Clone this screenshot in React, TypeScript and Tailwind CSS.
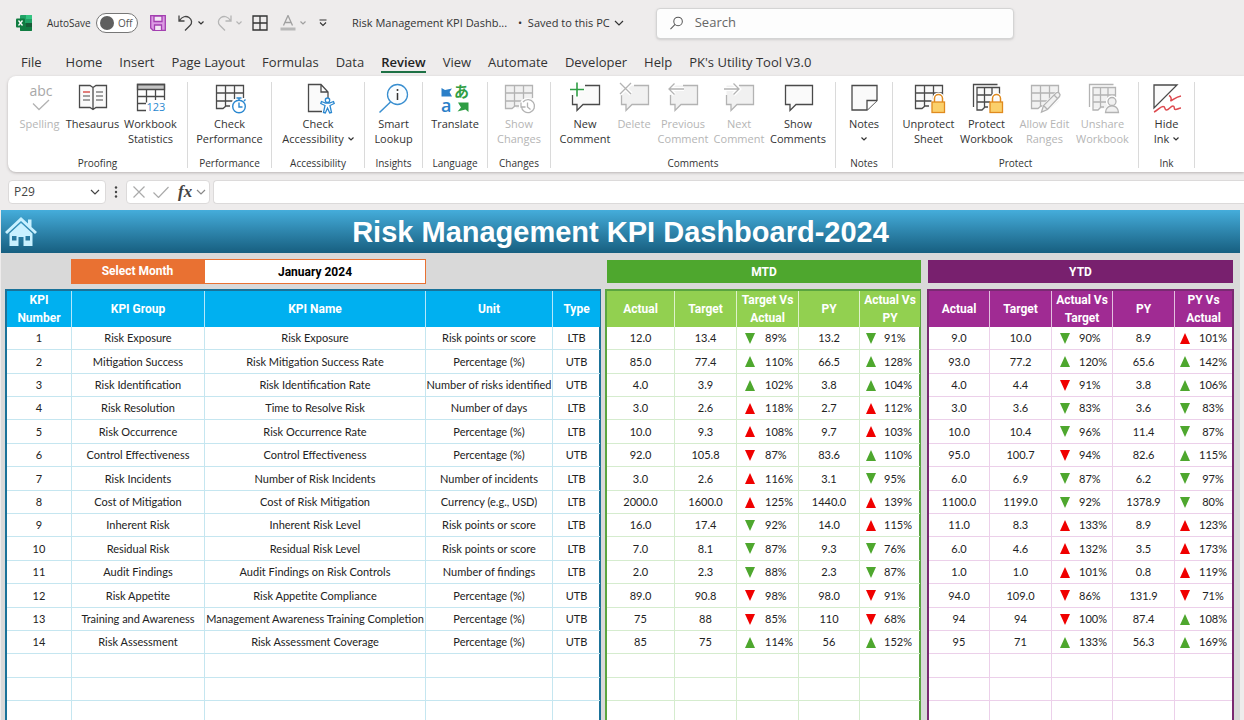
import type { ReactNode } from "react";
import clsx from "clsx";

/* ---------- icons ---------- */

const Icon = ({ children, gray }: { children: ReactNode; gray?: boolean }) => (
  <svg
    viewBox="0 0 32 32"
    className={clsx("h-8 w-8 shrink-0 overflow-visible", gray ? "text-[#b3b3b3]" : "text-[#4a4a4a]")}
    fill="none"
    stroke="currentColor"
    strokeWidth="1.3"
    aria-hidden="true"
  >
    {children}
  </svg>
);

const Chevron = ({ className }: { className?: string }) => (
  <svg viewBox="0 0 10 6" className={clsx("shrink-0", className)} fill="none" stroke="currentColor" strokeWidth="1.2" aria-hidden="true">
    <path d="M1 1l4 4 4-4" />
  </svg>
);

const SmallChevron = () => (
  <svg viewBox="0 0 6 4" className="h-1 w-[6px] shrink-0" fill="none" stroke="currentColor" strokeWidth="1.2" aria-hidden="true">
    <path d="M.5.500L3 3 5.500.500" />
  </svg>
);

const GridLines = ({ gray }: { gray?: boolean }) => (
  <>
    <path d="M2.5 3.5h27v16l-8 7H14l-2-2-3 2H2.5z" fill={gray ? "#f1f1f1" : "#fafafa"} stroke="none" />
    <path d="M29.5 16V3.5h-27v23H9l3-2.5h4M2.5 11h27M2.5 19h16M11.5 3.5V24M20.5 3.5V17" />
  </>
);

const Lock = () => (
  <g stroke="#e08a1e">
    <path d="M21.5 20v-3.500a4 4 0 0 1 8 0V20" stroke="#fff" strokeWidth="4" />
    <path d="M21.5 20v-3.500a4 4 0 0 1 8 0V20" strokeWidth="1.5" />
    <rect x="19" y="20" width="12.500" height="10.500" fill="#fbd06b" />
  </g>
);

const Bubble = ({ gray, notch }: { gray?: boolean; notch?: boolean }) => (
  <>
    <path d="M3.500 3.500h27v19H14l-6 6v-6H3.500z" fill={gray ? "#f1f1f1" : "#fafafa"} stroke="none" />
    {notch ? (
      <path d="M16 3.500h14.500v19H14l-6 6v-6H3.500V13" />
    ) : (
      <path d="M3.500 3.500h27v19H14l-6 6v-6H3.500z" />
    )}
  </>
);

const SpellingIcon = () => (
  <Icon gray>
    <text x="17" y="14" textAnchor="middle" fill="#a8a8a8" stroke="none" fontSize="14" fontFamily="Open Sans, sans-serif">
      abc
    </text>
    <path d="M9 21.500l6 6L25 18" />
  </Icon>
);

const BookIcon = () => (
  <Icon>
    <path d="M2.500 3.500H13l3 2 3-2h10.500v22H19l-3 2-3-2H2.500zM16 5.500v22" fill="#fafafa" />
    <path d="M6 14h7M6 18h7M19 10h7M19 14h7M19 18h7" strokeWidth="1.100" />
    <path d="M6 10h7" stroke="#d9534f" strokeWidth="1.600" />
  </Icon>
);

const StatisticsIcon = () => (
  <Icon>
    <path d="M2.500 2.500h27v5h-27z" fill="#c4c4c4" />
    <path d="M11 28.500H2.500v-26h27V18M2.500 14.500h27M2.500 21.500H11M11.500 7.500v13M20.500 7.500V18" />
    <text x="11.500" y="29" fill="#2b88d0" stroke="none" fontSize="11" fontFamily="Open Sans, sans-serif">
      123
    </text>
  </Icon>
);

const PerformanceIcon = () => (
  <Icon>
    <GridLines />
    <circle cx="25" cy="24.500" r="7" fill="#fff" stroke="#fff" strokeWidth="3" />
    <g stroke="#2b88d0" strokeWidth="1.400">
      <circle cx="25" cy="24.500" r="6.300" />
      <path d="M25 20.500v4.500h3.500M25 18v-2M22.500 16h5M30 19l1.500-1.500" />
    </g>
  </Icon>
);

const AccessibilityIcon = () => (
  <Icon>
    <path d="M20 29.500H6.500v-27H19l7 7.500v6M19 2.500V10h7" fill="#fafafa" />
    <g stroke="#2b88d0" fill="#fff" strokeWidth="1.300">
      <path d="M19.500 19.500l4 1.500h4l4-1.500.7 2-4.200 2 1.500 7-1.800.5-2.200-5-2.200 5-1.800-.5 1.500-7-4.200-2z" />
      <circle cx="25.500" cy="18.200" r="2.200" />
    </g>
  </Icon>
);

const LookupIcon = () => (
  <Icon>
    <g stroke="#3a8fd0">
      <circle cx="19.500" cy="12.500" r="10" fill="#fafdff" />
      <path d="M12.500 20L1.500 30.500" strokeWidth="1.500" />
    </g>
    <path d="M19.500 11v7" stroke="#333" strokeWidth="1.500" />
    <circle cx="19.500" cy="8" r="1" fill="#333" stroke="none" />
  </Icon>
);

const TranslateIcon = () => (
  <Icon>
    <g stroke="none">
      <path d="M2.500 6l3.500 2 7-1.500-2.500 3.500 2.500 4.500H2.500z" fill="#2b7fc8" />
      <path d="M29.500 30l-3-2.500-8 2 3.500-4-3-5h10.500z" fill="#2f9e44" />
      <text x="2" y="29.500" fill="#2b7fc8" fontSize="18" fontWeight="600" fontFamily="Open Sans, sans-serif">
        a
      </text>
      <text x="15" y="15" fill="#2f9e44" fontSize="15" fontWeight="700" fontFamily="Noto Sans CJK JP, sans-serif">
        あ
      </text>
    </g>
  </Icon>
);

const ChangesIcon = () => (
  <Icon gray>
    <GridLines gray />
    <circle cx="24.500" cy="24.500" r="7" fill="#fff" stroke="#fff" strokeWidth="3" />
    <path d="M18 20.500v4.500h4.500M18.500 24.500a6.500 6.500 0 1 0 1.500-4.500M24.500 20.500v4.500l3 2.500" />
  </Icon>
);

const NewCommentIcon = () => (
  <Icon>
    <Bubble notch />
    <path d="M8 0v15M.5 7.500h15" stroke="#fff" strokeWidth="4" />
    <path d="M8 .5v14M1 7.500h14" stroke="#2f9e44" strokeWidth="1.600" />
  </Icon>
);

const DeleteIcon = () => (
  <Icon gray>
    <Bubble gray notch />
    <path d="M2 1l11 11M13 1L2 12" stroke="#fff" strokeWidth="4" />
    <path d="M2 1l11 11M13 1L2 12" />
  </Icon>
);

const PreviousIcon = () => (
  <Icon gray>
    <Bubble gray notch />
    <path d="M2 7h15M7.500 1.500L2 7l5.500 5.500" stroke="#fff" strokeWidth="4" />
    <path d="M2 7h15M7.500 1.500L2 7l5.500 5.500" />
  </Icon>
);

const NextIcon = () => (
  <Icon gray>
    <Bubble gray notch />
    <path d="M1 7h15M10.500 1.500L16 7l-5.500 5.500" stroke="#fff" strokeWidth="4" />
    <path d="M1 7h15M10.500 1.500L16 7l-5.500 5.500" />
  </Icon>
);

const ShowCommentsIcon = () => (
  <Icon>
    <Bubble />
  </Icon>
);

const NotesIcon = () => (
  <Icon>
    <path d="M4 3.500h25v15l-10 9.500H4z" fill="#fafafa" />
    <path d="M29 18.500H19V28" fill="#fff" />
  </Icon>
);

const UnprotectIcon = () => (
  <Icon>
    <GridLines />
    <Lock />
  </Icon>
);

const StackedGrid = ({ gray }: { gray?: boolean }) => (
  <>
    <path d="M2.500 25V2.500h24" />
    <path d="M6 5.500h23v21H6z" fill={gray ? "#f1f1f1" : "#fafafa"} stroke="none" />
    <path d="M28.500 15V5.500H6V28h5l3-3h3M6 13h22.500M6 20h13M13.500 5.500V25M21 5.500V16" />
  </>
);

const ProtectIcon = () => (
  <Icon>
    <StackedGrid />
    <Lock />
  </Icon>
);

const RangesIcon = () => (
  <Icon gray>
    <GridLines gray />
    <path d="M13 29.500l2-6L27.500 11l3.500 3.500L18.500 27.500z" fill="#fff" stroke="#fff" strokeWidth="3" />
    <path d="M12.500 30l2-6.500L27 11a2.500 2.500 0 0 1 3.500 3.500L18.500 27.500zM14.500 23.500l4 4M25 13l3.500 3.500" fill="#f1f1f1" />
  </Icon>
);

const UnshareIcon = () => (
  <Icon gray>
    <StackedGrid gray />
    <g fill="#f1f1f1">
      <path d="M19 30.500c0-8 12-8 12 0z" stroke="#fff" strokeWidth="4" />
      <circle cx="25" cy="19.500" r="4" stroke="#fff" strokeWidth="4" />
      <path d="M18.500 30.500c0-9 13-9 13 0z" />
      <circle cx="25" cy="19.500" r="4" />
    </g>
  </Icon>
);

const InkIcon = () => (
  <Icon>
    <path d="M3 3h23L3 26z" fill="#fafafa" />
    <path d="M18 13.500c2 1 3 4 1.500 5.500 3-1 5-4 10.500-5M3 30c4-1.500 6-5.500 9-5.500s1 3.500 3.500 3.500 4-4 6.500-4 0 3.500 2.500 3.500 3-1.500 5.500-1.500" stroke="#dd4a4f" strokeWidth="1.500" />
  </Icon>
);

/* ---------- title bar ---------- */

const ExcelLogo = () => (
  <svg viewBox="0 0 16 16" className="h-4 w-4" aria-hidden="true">
    <rect x="4" y="0" width="12" height="16" rx="1" fill="#21a366" />
    <path d="M4 8h12v7a1 1 0 0 1-1 1H5a1 1 0 0 1-1-1z" fill="#107c41" />
    <path d="M10 8h6v4h-6z" fill="#185c37" />
    <path d="M10 0h5a1 1 0 0 1 1 1v3h-6z" fill="#33c481" />
    <rect x="0" y="3.500" width="9" height="9" rx="1" fill="#107c41" />
    <path d="M2.500 5.500l4 5M6.500 5.500l-4 5" stroke="#fff" strokeWidth="1.300" />
  </svg>
);

const TitleBar = () => (
  <header className="flex h-[46px] shrink-0 items-center pl-4 text-[11px] text-[#333]">
    <ExcelLogo />
    <span id="autosave" className="ml-[15px] w-[49px] text-[10px]">
      AutoSave
    </span>
    <button
      role="switch"
      aria-checked="false"
      aria-labelledby="autosave"
      className="flex h-5 w-[42px] items-center gap-1 rounded-full border border-[#777] bg-white pl-[3px]"
    >
      <span className="h-[14px] w-[14px] rounded-full bg-[#5f5f5f]" />
      <span className="text-[10px] text-[#555]">Off</span>
    </button>
    <button aria-label="Save" className="ml-3">
      <svg viewBox="0 0 16 16" className="h-4 w-4" fill="#dc9be4" stroke="#a33fb0" strokeWidth="1.300">
        <path d="M.7.700h14.600v14.600H3L.7 13z" />
        <path d="M4 1h8v5.500H4zM4.500 15v-5h7v5" fill="#f3e6f5" />
      </svg>
    </button>
    <button aria-label="Undo" className="ml-3 flex items-center gap-1">
      <svg viewBox="0 0 16 16" className="h-4 w-4" fill="none" stroke="#444" strokeWidth="1.300">
        <path d="M1 .5V6h5.500M1.500 5.500C4 1.500 8 .5 11 2.500s3.500 5.500 1 8L7 15.500" />
      </svg>
      <SmallChevron />
    </button>
    <button aria-label="Redo" className="ml-3 flex items-center gap-1 text-[#b5b5b5]">
      <svg viewBox="0 0 16 16" className="h-4 w-4" fill="none" stroke="currentColor" strokeWidth="1.300">
        <path d="M15 .5V6H9.500M14.500 5.500C12 1.500 8 .5 5 2.500s-3.500 5.500-1 8L9 15.500" />
      </svg>
      <SmallChevron />
    </button>
    <button aria-label="Borders" className="ml-[10px]">
      <svg viewBox="0 0 16 16" className="h-4 w-4" fill="none" stroke="#333" strokeWidth="1.300">
        <path d="M1 1h14v14H1zM8 1v14M1 8h14" />
      </svg>
    </button>
    <button aria-label="Font color" className="ml-3 flex items-center gap-1 text-[#a0a0a0]">
      <svg viewBox="0 0 16 16" className="h-4 w-4" fill="none" stroke="currentColor" strokeWidth="1.300">
        <path d="M3.500 10.500L8 .5l4.500 10M5 7.500h6" />
        <path d="M.5 14h15" stroke="#b8b8b8" strokeWidth="3" />
      </svg>
      <SmallChevron />
    </button>
    <button aria-label="Customize toolbar" className="ml-[13px]">
      <svg viewBox="0 0 8 8" className="h-2 w-2" fill="none" stroke="#333" strokeWidth="1.100">
        <path d="M.5 1h7M1 3.500l3 3 3-3" />
      </svg>
    </button>
    <span className="ml-[25px] w-[166px] whitespace-nowrap">Risk Management KPI Dashb...</span>
    <button className="flex items-center gap-1 whitespace-nowrap">
      <span>•&nbsp; Saved to this PC</span>
      <Chevron className="h-[6px] w-[10px]" />
    </button>
    <label className="ml-8 flex h-[31px] w-[358px] items-center gap-3 rounded-sm border border-[#d4d4d4] bg-[#fdfdfd] pl-[13px] shadow-sm">
      <svg viewBox="0 0 14 14" className="h-[14px] w-[14px]" fill="none" stroke="#555" strokeWidth="1.100">
        <circle cx="8.700" cy="5.300" r="4.600" />
        <path d="M5.500 8.500L.5 13.500" />
      </svg>
      <input type="search" placeholder="Search" aria-label="Search" className="w-full bg-transparent text-[13px] outline-none placeholder:text-[#666]" />
    </label>
  </header>
);

/* ---------- ribbon ---------- */

const tabs = [
  "File",
  "Home",
  "Insert",
  "Page Layout",
  "Formulas",
  "Data",
  "Review",
  "View",
  "Automate",
  "Developer",
  "Help",
  "PK's Utility Tool V3.0",
];

const Tabs = () => (
  <nav className="flex h-[30px] shrink-0 items-start gap-[17px] pt-[7px] pl-[21px] text-[13px] leading-4 text-[#333]">
    {tabs.map((tab) => (
      <button
        key={tab}
        className={clsx(
          "h-5 border-b-2 whitespace-nowrap",
          tab === "File" && "mr-[7px]",
          tab === "Review" ? "border-[#1e7145] font-semibold text-[#222]" : "border-transparent",
        )}
      >
        {tab}
      </button>
    ))}
  </nav>
);

type Tool = {
  icon: ReactNode;
  lines: string[];
  width: string;
  disabled?: boolean;
  menu?: boolean;
};

type Group = { name: string; width: string; tools: Tool[] };

const groups: Group[] = [
  {
    name: "Proofing",
    width: "w-[180px]",
    tools: [
      { icon: <SpellingIcon />, lines: ["Spelling"], width: "w-[52px]", disabled: true },
      { icon: <BookIcon />, lines: ["Thesaurus"], width: "w-[54px]" },
      { icon: <StatisticsIcon />, lines: ["Workbook", "Statistics"], width: "w-[62px]" },
    ],
  },
  {
    name: "Performance",
    width: "w-[84px]",
    tools: [{ icon: <PerformanceIcon />, lines: ["Check", "Performance"], width: "w-[76px]" }],
  },
  {
    name: "Accessibility",
    width: "w-[93px]",
    tools: [{ icon: <AccessibilityIcon />, lines: ["Check", "Accessibility"], width: "w-[86px]", menu: true }],
  },
  {
    name: "Insights",
    width: "w-[58px]",
    tools: [{ icon: <LookupIcon />, lines: ["Smart", "Lookup"], width: "w-[50px]" }],
  },
  {
    name: "Language",
    width: "w-[65px]",
    tools: [{ icon: <TranslateIcon />, lines: ["Translate"], width: "w-[56px]" }],
  },
  {
    name: "Changes",
    width: "w-[63px]",
    tools: [{ icon: <ChangesIcon />, lines: ["Show", "Changes"], width: "w-[54px]", disabled: true }],
  },
  {
    name: "Comments",
    width: "w-[285px]",
    tools: [
      { icon: <NewCommentIcon />, lines: ["New", "Comment"], width: "w-[54px]" },
      { icon: <DeleteIcon />, lines: ["Delete"], width: "w-[44px]", disabled: true },
      { icon: <PreviousIcon />, lines: ["Previous", "Comment"], width: "w-[54px]", disabled: true },
      { icon: <NextIcon />, lines: ["Next", "Comment"], width: "w-[58px]", disabled: true },
      { icon: <ShowCommentsIcon />, lines: ["Show", "Comments"], width: "w-[60px]" },
    ],
  },
  {
    name: "Notes",
    width: "w-[57px]",
    tools: [{ icon: <NotesIcon />, lines: ["Notes", ""], width: "w-[44px]", menu: true }],
  },
  {
    name: "Protect",
    width: "w-[246px]",
    tools: [
      { icon: <UnprotectIcon />, lines: ["Unprotect", "Sheet"], width: "w-[58px]" },
      { icon: <ProtectIcon />, lines: ["Protect", "Workbook"], width: "w-[58px]" },
      { icon: <RangesIcon />, lines: ["Allow Edit", "Ranges"], width: "w-[58px]", disabled: true },
      { icon: <UnshareIcon />, lines: ["Unshare", "Workbook"], width: "w-[58px]", disabled: true },
    ],
  },
  {
    name: "Ink",
    width: "w-[56px]",
    tools: [{ icon: <InkIcon />, lines: ["Hide", "Ink"], width: "w-[44px]", menu: true }],
  },
];

const ToolButton = ({ tool }: { tool: Tool }) => (
  <button
    disabled={tool.disabled}
    className={clsx(
      "flex flex-col items-center text-[11px] leading-[15px] whitespace-nowrap",
      tool.width,
      tool.disabled ? "text-[#b5b5b5]" : "text-[#333]",
    )}
  >
    <span className="mb-[2px]">{tool.icon}</span>
    {tool.lines.map((line, i) => (
      <span key={i} className="flex h-[15px] items-center gap-1">
        {line}
        {tool.menu && i === tool.lines.length - 1 && <SmallChevron />}
      </span>
    ))}
  </button>
);

const Ribbon = () => (
  <section aria-label="Review" className="ml-2 flex h-24 shrink-0 overflow-hidden rounded-l-lg bg-white pt-[6px] pb-1 shadow-[0_1px_3px_#b8b4b4]">
    {groups.map((group) => (
      <div key={group.name} className={clsx("flex shrink-0 flex-col justify-between border-r border-[#dadada]", group.width)}>
        <div className="flex justify-center">
          {group.tools.map((tool) => (
            <ToolButton key={tool.lines.join(" ")} tool={tool} />
          ))}
        </div>
        <div className="text-center text-[10px] leading-[10px] text-[#333]">{group.name}</div>
      </div>
    ))}
  </section>
);

const FormulaBar = () => (
  <div className="flex h-[38px] shrink-0 items-center pt-px pl-2 text-[#444]">
    <div className="flex h-6 w-[98px] items-center rounded-sm border border-[#dcdada] bg-white px-[5px]">
      <input aria-label="Name box" defaultValue="P29" className="w-0 grow text-xs outline-none" />
      <button aria-label="Open name list">
        <Chevron className="h-[6px] w-[10px]" />
      </button>
    </div>
    <svg viewBox="0 0 4 12" className="mx-2 h-3 w-1" fill="#444" aria-hidden="true">
      <circle cx="2" cy="1.500" r="1.200" />
      <circle cx="2" cy="6" r="1.200" />
      <circle cx="2" cy="10.500" r="1.200" />
    </svg>
    <div className="flex h-6 w-[84px] items-center gap-2 rounded-sm border border-[#dcdada] bg-white pl-[6px]">
      <button aria-label="Cancel">
        <svg viewBox="0 0 12 12" className="h-3 w-3" stroke="#aaa" strokeWidth="1.200">
          <path d="M.5.500l11 11M11.500.500l-11 11" />
        </svg>
      </button>
      <button aria-label="Enter">
        <svg viewBox="0 0 16 12" className="h-3 w-4" fill="none" stroke="#aaa" strokeWidth="1.200">
          <path d="M.5 6.500l5 5L15.500 1" />
        </svg>
      </button>
      <button className="flex items-center gap-1 pl-px font-['Liberation_Serif',serif] text-[17px] leading-5 font-bold italic">
        fx
        <Chevron className="h-[6px] w-[10px] text-[#888]" />
      </button>
    </div>
    <input aria-label="Formula" className="ml-[3px] h-6 grow rounded-l-sm border border-r-0 border-[#dcdada] bg-white px-2 text-xs outline-none" />
  </div>
);

/* ---------- dashboard ---------- */

type Mark = "ug" | "dg" | "ur" | "dr";
type Delta = [Mark, string];
type Cell = string | Delta;

const kpis: string[][] = [
  ["Risk Exposure", "Risk Exposure", "Risk points or score", "LTB"],
  ["Mitigation Success", "Risk Mitigation Success Rate", "Percentage (%)", "UTB"],
  ["Risk Identification", "Risk Identification Rate", "Number of risks identified", "UTB"],
  ["Risk Resolution", "Time to Resolve Risk", "Number of days", "LTB"],
  ["Risk Occurrence", "Risk Occurrence Rate", "Percentage (%)", "LTB"],
  ["Control Effectiveness", "Control Effectiveness", "Percentage (%)", "UTB"],
  ["Risk Incidents", "Number of Risk Incidents", "Number of incidents", "LTB"],
  ["Cost of Mitigation", "Cost of Risk Mitigation", "Currency (e.g., USD)", "LTB"],
  ["Inherent Risk", "Inherent Risk Level", "Risk points or score", "LTB"],
  ["Residual Risk", "Residual Risk Level", "Risk points or score", "LTB"],
  ["Audit Findings", "Audit Findings on Risk Controls", "Number of findings", "LTB"],
  ["Risk Appetite", "Risk Appetite Compliance", "Percentage (%)", "UTB"],
  ["Training and Awareness", "Management Awareness Training Completion", "Percentage (%)", "UTB"],
  ["Risk Assessment", "Risk Assessment Coverage", "Percentage (%)", "UTB"],
];

const mtd: Cell[][] = [
  ["12.0", "13.4", ["dg", "89%"], "13.2", ["dg", "91%"]],
  ["85.0", "77.4", ["ug", "110%"], "66.5", ["ug", "128%"]],
  ["4.0", "3.9", ["ug", "102%"], "3.8", ["ug", "104%"]],
  ["3.0", "2.6", ["ur", "118%"], "2.7", ["ur", "112%"]],
  ["10.0", "9.3", ["ur", "108%"], "9.7", ["ur", "103%"]],
  ["92.0", "105.8", ["dr", "87%"], "83.6", ["ug", "110%"]],
  ["3.0", "2.6", ["ur", "116%"], "3.1", ["dg", "95%"]],
  ["2000.0", "1600.0", ["ur", "125%"], "1440.0", ["ur", "139%"]],
  ["16.0", "17.4", ["dg", "92%"], "14.0", ["ur", "115%"]],
  ["7.0", "8.1", ["dg", "87%"], "9.3", ["dg", "76%"]],
  ["2.0", "2.3", ["dg", "88%"], "2.3", ["dg", "87%"]],
  ["89.0", "90.8", ["dr", "98%"], "98.0", ["dr", "91%"]],
  ["75", "88", ["dr", "85%"], "110", ["dr", "68%"]],
  ["85", "75", ["ug", "114%"], "56", ["ug", "152%"]],
];

const ytd: Cell[][] = [
  ["9.0", "10.0", ["dg", "90%"], "8.9", ["ur", "101%"]],
  ["93.0", "77.2", ["ug", "120%"], "65.6", ["ug", "142%"]],
  ["4.0", "4.4", ["dr", "91%"], "3.8", ["ug", "106%"]],
  ["3.0", "3.6", ["dg", "83%"], "3.6", ["dg", "83%"]],
  ["10.0", "10.4", ["dg", "96%"], "11.4", ["dg", "87%"]],
  ["95.0", "100.7", ["dr", "94%"], "82.6", ["ug", "115%"]],
  ["6.0", "6.9", ["dg", "87%"], "6.2", ["dg", "97%"]],
  ["1100.0", "1199.0", ["dg", "92%"], "1378.9", ["dg", "80%"]],
  ["11.0", "8.3", ["ur", "133%"], "8.9", ["ur", "123%"]],
  ["6.0", "4.6", ["ur", "132%"], "3.5", ["ur", "173%"]],
  ["1.0", "1.0", ["ur", "101%"], "0.8", ["ur", "119%"]],
  ["94.0", "109.0", ["dr", "86%"], "131.9", ["dr", "71%"]],
  ["94", "94", ["dr", "100%"], "87.4", ["ug", "108%"]],
  ["95", "71", ["ug", "133%"], "56.3", ["ug", "169%"]],
];

const Triangle = ({ mark }: { mark: Mark }) => (
  <svg viewBox="0 0 10 11" className={clsx("h-[11px] w-[10px] shrink-0", mark[1] === "g" ? "fill-[#4ea72e]" : "fill-[#f00000]")} aria-hidden="true">
    <path d={mark[0] === "u" ? "M5 0l5 11H0z" : "M5 11L0 0h10z"} />
  </svg>
);

type GridProps = {
  columns: { label: string; width: string; delta?: string; text?: string }[];
  rows: Cell[][];
  frame: string;
  head: string;
  line: string;
};

const EMPTY_ROWS = 6;

const DataGrid = ({ columns, rows, frame, head, line }: GridProps) => (
  <div className={clsx("border-2 bg-white", frame)}>
    <table className="w-full table-fixed border-separate border-spacing-0 text-center text-[11px] leading-4 text-[#222]">
      <colgroup>
        {columns.map((col, i) => (
          <col key={i} className={col.width} />
        ))}
      </colgroup>
      <thead>
        <tr className={clsx("h-9 font-['Roboto',sans-serif] text-xs leading-[18px] text-white", head)}>
          {columns.map((col, i) => (
            <th key={i} scope="col" className="border-r border-white/70 p-0 font-bold last:border-r-0">
              {col.label}
            </th>
          ))}
        </tr>
      </thead>
      <tbody className="font-['Lato',sans-serif]">
        {[...rows, ...Array.from({ length: EMPTY_ROWS }, () => columns.map(() => ""))].map((row, r) => (
          <tr key={r} className="h-[23px] nth-[5n+2]:h-6 nth-[5n+5]:h-6">
            {row.map((cell, c) => (
              <td key={c} className={clsx("border-r border-b p-0 whitespace-nowrap last:border-r-0", line)}>
                {typeof cell === "string" ? (
                  cell
                ) : (
                  <span className={clsx("flex items-center", columns[c].delta)}>
                    <Triangle mark={cell[0]} />
                    <span className={columns[c].text}>{cell[1]}</span>
                  </span>
                )}
              </td>
            ))}
          </tr>
        ))}
      </tbody>
    </table>
  </div>
);

const HomeIcon = () => (
  <svg viewBox="0 0 32 30" className="h-[30px] w-8" fill="#c9f1ff" aria-hidden="true">
    <path d="M16 0L0 15l2 2L16 4l14 13 2-2-5.500-5V2.500h-3.500V6.500z" />
    <path d="M16 6L4.500 16.500V29h9v-9h5v9h9V16.500zM7 19h4.500v4.500H7zm13.500 0H25v4.500h-4.500z" fillRule="evenodd" />
  </svg>
);

const Banner = ({ children, className }: { children: ReactNode; className: string }) => (
  <h2 className={clsx("my-px h-[23px] text-center text-xs leading-6 font-bold text-white", className)}>{children}</h2>
);

const Dashboard = () => (
  <main className="mr-1 ml-px grow overflow-hidden bg-[#d9d9d9] font-['Roboto',sans-serif]">
    <div className="flex h-[43px] items-center bg-gradient-to-b from-[#45addb] to-[#175f80] pl-1">
      <a href="#home" aria-label="Home">
        <HomeIcon />
      </a>
      <h1 className="mr-9 grow text-center font-['Liberation_Sans',sans-serif] text-[29px] leading-10 font-bold text-white">
        Risk Management KPI Dashboard-2024
      </h1>
    </div>
    <div className="flex pt-[6px] pr-[6px] pl-1">
      <section className="mr-1 flex min-w-0 flex-[596] flex-col gap-[5px]">
        <div className="grid h-[25px] grid-cols-[66fr_133fr_222fr_175fr] text-xs font-bold">
          <label htmlFor="month" className="col-start-2 bg-[#e97132] text-center leading-[25px] text-white">
            Select Month
          </label>
          <select id="month" className="appearance-none border border-[#e97132] bg-white text-center text-black">
            <option>January 2024</option>
          </select>
        </div>
        <DataGrid
          frame="border-[#1a7299]"
          head="bg-[#00b0f0]"
          line="border-[#c5e6f0]"
          columns={[
            { label: "KPI Number", width: "w-[65px]" },
            { label: "KPI Group", width: "w-[133px]" },
            { label: "KPI Name", width: "w-[221px]" },
            { label: "Unit", width: "w-[127px]" },
            { label: "Type", width: "w-[47px]" },
          ]}
          rows={kpis.map((kpi, i) => [String(i + 1), ...kpi])}
        />
      </section>
      <section className="mr-[6px] flex min-w-0 flex-[316] flex-col gap-[5px]">
        <Banner className="ml-[2px] bg-[#4ea72e]">MTD</Banner>
        <DataGrid
          frame="border-[#5aa53f]"
          head="bg-[#92d050]"
          line="border-[#d5ecce]"
          columns={[
            { label: "Actual", width: "w-[68px]" },
            { label: "Target", width: "w-[62px]" },
            { label: "Target Vs Actual", width: "w-[62px]", delta: "pl-2", text: "ml-[10px]" },
            { label: "PY", width: "w-[61px]" },
            { label: "Actual Vs PY", width: "w-[60px]", delta: "pl-[6px]", text: "ml-2" },
          ]}
          rows={mtd}
        />
      </section>
      <section className="flex min-w-0 flex-[307] flex-col gap-[5px]">
        <Banner className="mx-px bg-[#78206e]">YTD</Banner>
        <DataGrid
          frame="border-[#7a2a72]"
          head="bg-[#a02b93]"
          line="border-[#ecd0ea]"
          columns={[
            { label: "Actual", width: "w-[61px]" },
            { label: "Target", width: "w-[62px]" },
            { label: "Actual Vs Target", width: "w-[61px]", delta: "pl-2", text: "ml-[9px]" },
            { label: "PY", width: "w-[62px]" },
            { label: "PY Vs Actual", width: "w-[57px]", delta: "pl-[5px]", text: "grow pl-1" },
          ]}
          rows={ytd}
        />
      </section>
    </div>
  </main>
);

export default function App() {
  return (
    <div className="flex h-screen flex-col overflow-hidden bg-[#eeecec] font-['Open_Sans',sans-serif]">
      <TitleBar />
      <Tabs />
      <Ribbon />
      <FormulaBar />
      <Dashboard />
    </div>
  );
}
